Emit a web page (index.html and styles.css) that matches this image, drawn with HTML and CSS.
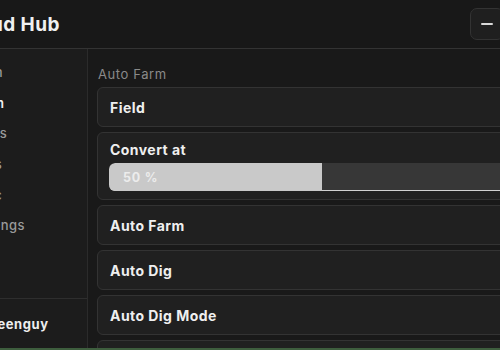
FILE: index.html
```html
<!DOCTYPE html>
<html lang="en">
<head>
    <meta charset="UTF-8">
    <title>Cloud Hub</title>
    <link rel="stylesheet" href="styles.css">
</head>
<body>
    <div class="window">
        <div class="header">
            <h1 class="title">Cloud Hub</h1>
            <div class="controls">
                <div class="ctrl-btn"><span class="minus"></span></div>
                <div class="ctrl-btn"></div>
            </div>
        </div>

        <div class="main">
            <div class="sidebar">
                <div class="tabs">
                    <div class="tab">Main</div>
                    <div class="tab active">Farm</div>
                    <div class="tab">Items</div>
                    <div class="tab">Toys</div>
                    <div class="tab">Misc</div>
                    <div class="tab">Settings</div>
                </div>
                <div class="user">
                    <div class="avatar"></div>
                    <span>greenguy</span>
                </div>
            </div>

            <div class="content">
                <p class="section">Auto Farm</p>

                <div class="card">Field</div>

                <div class="card card-slider">
                    <p>Convert at</p>
                    <div class="track">
                        <div class="fill" style="width: 50%;"></div>
                        <span class="value">50 %</span>
                    </div>
                </div>

                <div class="card">Auto Farm</div>
                <div class="card">Auto Dig</div>
                <div class="card">Auto Dig Mode</div>
                <div class="card">Auto Sprinkler</div>
            </div>
        </div>
    </div>
    <div class="taskbar"></div>
</body>
</html>
```

FILE: styles.css
```css
*{
    margin: 0;
    padding: 0;
    box-sizing: border-box;
}

body{
    width: 500px;
    height: 350px;
    overflow: hidden;
    background-color: #191919;
    font-family: "Inter", "Noto Sans", sans-serif;
    display: flex;
    flex-direction: column;
}

.window{
    width: 610px;
    height: 348px;
    margin-left: -50px;
    display: flex;
    flex-direction: column;
    background-color: #191919;
}

.header{
    height: 49px;
    flex-shrink: 0;
    border-bottom: 1px solid #333;
    background-color: #181818;
    display: flex;
    align-items: center;
    justify-content: space-between;
    padding: 0 8px 0 9px;
}

.title{
    font-size: 19px;
    font-weight: 700;
    color: #f0f0f0;
    letter-spacing: 0.4px;
}

.controls{
    display: flex;
    gap: 6px;
    margin-right: 8px;
}

.ctrl-btn{
    width: 34px;
    height: 32px;
    border-radius: 7px;
    border: 1px solid #333;
    background-color: #1f1f1f;
    display: flex;
    align-items: center;
    justify-content: center;
}

.minus{
    width: 12px;
    height: 2px;
    border-radius: 1px;
    background-color: #d8d8d8;
}

.main{
    flex: 1;
    display: flex;
    min-height: 0;
}

.sidebar{
    width: 138px;
    flex-shrink: 0;
    background-color: #1c1c1c;
    border-right: 1px solid #2b2b2b;
    display: flex;
    flex-direction: column;
}

.tabs{
    flex: 1;
    padding-top: 8px;
    padding-left: 21px;
}

.tab{
    height: 30.6px;
    display: flex;
    align-items: center;
    font-size: 13px;
    font-weight: 500;
    letter-spacing: 0.4px;
    color: #9a9a9a;
}

.tab.active{
    color: #f2f2f2;
    font-weight: 600;
}

.user{
    height: 50px;
    border-top: 1px solid #2e2e2e;
    display: flex;
    align-items: center;
    gap: 5px;
    padding-left: 2px;
    font-size: 13px;
    font-weight: 700;
    letter-spacing: 0.6px;
    color: #eee;
}

.avatar{
    width: 26px;
    height: 26px;
    border-radius: 50%;
    background-color: #333;
}

.content{
    flex: 1;
    padding: 17px 0 0 9px;
    overflow: hidden;
}

.section{
    font-size: 13px;
    line-height: 16px;
    color: #8a8a8a;
    letter-spacing: 0.6px;
    padding-left: 1px;
    margin-bottom: 5px;
}

.card{
    height: 40px;
    margin-bottom: 5px;
    border: 1px solid #333;
    border-radius: 6px;
    background-color: #202020;
    padding: 0 12px;
    display: flex;
    align-items: center;
    font-size: 14px;
    font-weight: 700;
    letter-spacing: 0.45px;
    color: #efefef;
}

.card-slider{
    height: 68px;
    flex-direction: column;
    align-items: stretch;
    padding-top: 9px;
    margin-bottom: 5px;
}

.card-slider p{
    line-height: 16px;
    margin-bottom: 5px;
}

.track{
    position: relative;
    width: 426px;
    height: 28px;
    margin-left: -1px;
    border-radius: 6px;
    background-color: #373737;
    box-shadow: inset 0 -1px 0 #d0d0d0;
    overflow: hidden;
}

.fill{
    height: 100%;
    background-color: #c9c9c9;
    border-radius: 6px 0 0 6px;
}

.value{
    position: absolute;
    left: 14px;
    top: 7px;
    font-size: 12.5px;
    font-weight: 700;
    color: #ececec;
    letter-spacing: 0.8px;
}

.taskbar{
    height: 2px;
    background-color: #3e5e3e;
}
```
